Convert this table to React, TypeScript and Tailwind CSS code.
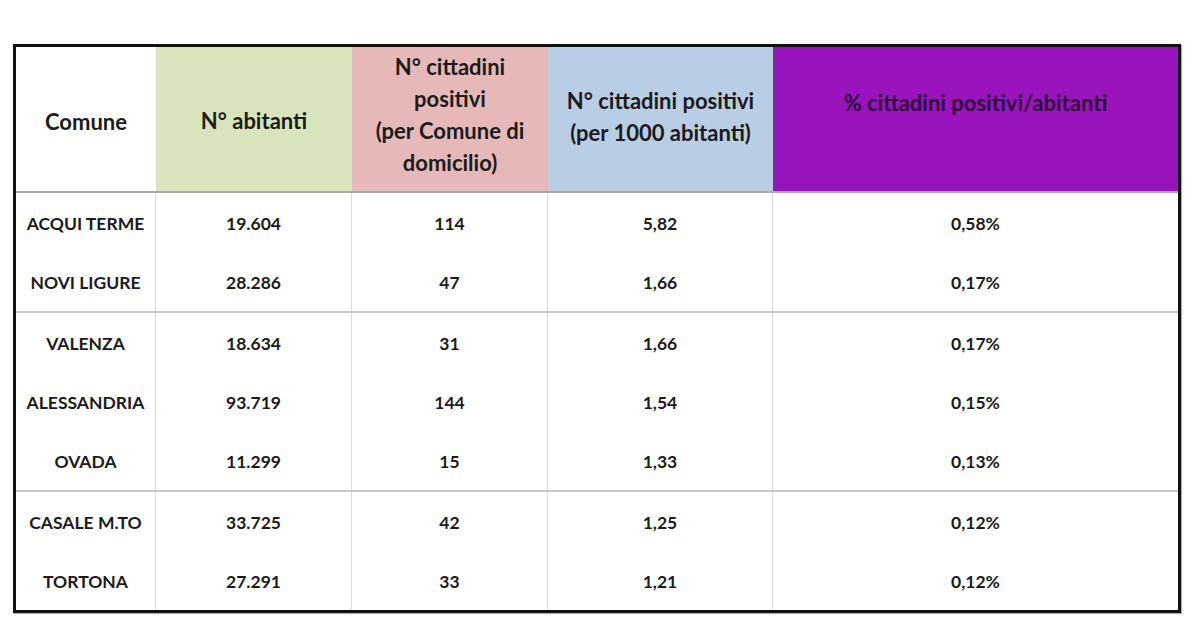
import React from 'react';

type Row = { comune: string; abitanti: string; positivi: string; per1000: string; perc: string };

const GROUPS: Row[][] = [
  [
    { comune: 'ACQUI TERME', abitanti: '19.604', positivi: '114', per1000: '5,82', perc: '0,58%' },
    { comune: 'NOVI LIGURE', abitanti: '28.286', positivi: '47', per1000: '1,66', perc: '0,17%' },
  ],
  [
    { comune: 'VALENZA', abitanti: '18.634', positivi: '31', per1000: '1,66', perc: '0,17%' },
    { comune: 'ALESSANDRIA', abitanti: '93.719', positivi: '144', per1000: '1,54', perc: '0,15%' },
    { comune: 'OVADA', abitanti: '11.299', positivi: '15', per1000: '1,33', perc: '0,13%' },
  ],
  [
    { comune: 'CASALE M.TO', abitanti: '33.725', positivi: '42', per1000: '1,25', perc: '0,12%' },
    { comune: 'TORTONA', abitanti: '27.291', positivi: '33', per1000: '1,21', perc: '0,12%' },
  ],
];

const COLS = 'grid grid-cols-[140px_196px_196px_225px_1fr]';

function Cell({ children, last }: { children: React.ReactNode; last?: boolean }) {
  return (
    <div
      className={`flex items-center justify-center h-[59px] pt-[3px] text-[17.5px] font-bold text-[#1b1b1b] ${
        last ? '' : 'border-r border-[#dcdcdc]'
      }`}
    >
      {children}
    </div>
  );
}

export default function App() {
  return (
    <div
      className="w-[1200px] h-[640px] bg-white pt-[44px] pl-[13px]"
      style={{ fontFamily: 'Lato, "Open Sans", sans-serif' }}
    >
      <div className="w-[1168px] border-[3px] border-[#111] shadow-[1px_1px_1px_rgba(0,0,0,0.3)]">
        {/* header */}
        <div className={`${COLS} h-[146px] text-[22px] font-bold leading-[32px] text-[#1b1b1b] text-center border-b-2 border-[#a8a8a8]`}>
          <div className="flex items-center justify-center bg-white pt-[6px]">Comune</div>
          <div className="flex items-center justify-center bg-[#d8e4bc] pt-[4px]">N° abitanti</div>
          <div className="flex items-center justify-center bg-[#e6b9b8] pb-[8px]">
            <span>
              N° cittadini
              <br />
              positivi
              <br />
              (per Comune di
              <br />
              domicilio)
            </span>
          </div>
          <div className="flex items-center justify-center bg-[#b9cde5] pb-[4px]">
            <span>
              N° cittadini positivi
              <br />
              (per 1000 abitanti)
            </span>
          </div>
          <div className="flex items-start justify-center bg-[#9a14bd] pt-[40px] text-[#2a0838]">
            % cittadini positivi/abitanti
          </div>
        </div>

        {/* body */}
        {GROUPS.map((group, gi) => (
          <div key={gi} className={gi < GROUPS.length - 1 ? 'border-b-2 border-[#c8c8c8]' : ''}>
            {group.map((r) => (
              <div key={r.comune} className={COLS}>
                <Cell>{r.comune}</Cell>
                <Cell>{r.abitanti}</Cell>
                <Cell>{r.positivi}</Cell>
                <Cell>{r.per1000}</Cell>
                <Cell last>{r.perc}</Cell>
              </div>
            ))}
          </div>
        ))}
      </div>
    </div>
  );
}
